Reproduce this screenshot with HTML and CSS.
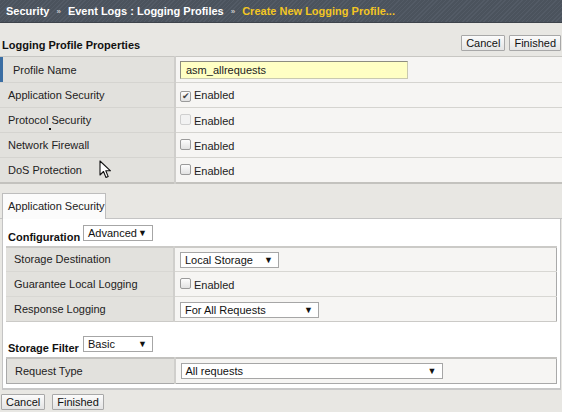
FILE: index.html
```html
<!DOCTYPE html>
<html>
<head>
<meta charset="utf-8">
<link rel="stylesheet" href="styles.css">
</head>
<body>
<div class="crumb">
  <span>Security</span><span class="sep">»</span><span>Event Logs : Logging Profiles</span><span class="sep">»</span><span class="cur">Create New Logging Profile...</span>
</div>
<div class="titlebar">
  <h2 class="title">Logging Profile Properties</h2>
  <div class="btns"><button class="btn">Cancel</button><button class="btn">Finished</button></div>
</div>
<table class="props">
  <tr class="first"><td class="lbl marked">Profile Name</td><td class="val"><div class="input">asm_allrequests</div></td></tr>
  <tr><td class="lbl">Application Security</td><td class="val"><span class="cb checked">✔</span><span class="en">Enabled</span></td></tr>
  <tr><td class="lbl">Protocol Security<span class="dot"></span></td><td class="val"><span class="cb disabled"></span><span class="en">Enabled</span></td></tr>
  <tr><td class="lbl">Network Firewall</td><td class="val"><span class="cb"></span><span class="en">Enabled</span></td></tr>
  <tr><td class="lbl">DoS Protection<svg class="cursor" width="13" height="19" viewBox="0 0 13 19"><path d="M1 1 L1 15 L4.5 11.5 L7 17.5 L9.2 16.6 L6.8 10.8 L11.5 10.8 Z" fill="#fff" stroke="#111" stroke-width="1.1" stroke-linejoin="round"/></svg></td><td class="val"><span class="cb"></span><span class="en">Enabled</span></td></tr>
</table>
<div class="tabstrip"><div class="tab">Application Security</div></div>
<div class="panel">
  <div class="cfg"><span class="cfglbl">Configuration</span><div class="sel sel-sm"><span>Advanced</span><span class="arr">▼</span></div></div>
  <table class="inner">
    <tr><td class="lbl">Storage Destination</td><td class="val"><div class="sel sel-md"><span>Local Storage</span><span class="arr">▼</span></div></td></tr>
    <tr><td class="lbl">Guarantee Local Logging</td><td class="val"><span class="cb"></span><span class="en">Enabled</span></td></tr>
    <tr><td class="lbl">Response Logging</td><td class="val"><div class="sel sel-lg"><span>For All Requests</span><span class="arr">▼</span></div></td></tr>
  </table>
  <div class="cfg cfg2"><span class="cfglbl">Storage Filter</span><div class="sel sel-sm"><span>Basic</span><span class="arr">▼</span></div></div>
  <table class="inner inner2">
    <tr><td class="lbl">Request Type</td><td class="val"><div class="sel sel-xl"><span>All requests</span><span class="arr">▼</span></div></td></tr>
  </table>
</div>
<div class="footer"><button class="btn">Cancel</button><button class="btn">Finished</button></div>
</body>
</html>
```
FILE: styles.css
```css
* { box-sizing: border-box; }
html, body { margin: 0; padding: 0; }
body {
  width: 562px;
  height: 412px;
  overflow: hidden;
  background: #e8e7e3;
  font-family: "Liberation Sans", Arial, sans-serif;
  font-size: 11px;
  color: #222;
}
.crumb {
  height: 23px;
  display: flex;
  align-items: center;
  padding-left: 6px;
  gap: 7px;
  color: #fff;
  font-weight: bold;
  font-size: 11px;
  background: repeating-linear-gradient(135deg, #535b66 0 1px, #4b535d 1px 3px);
  border-bottom: 1px solid #3d434b;
}
.crumb .sep { font-size: 8px; color: #c8c8c8; }
.crumb .cur { color: #f3c623; }
.titlebar {
  height: 33px;
  display: flex;
  justify-content: space-between;
  align-items: flex-start;
}
.title {
  margin: 16px 0 0 2px;
  font-size: 11px;
  font-weight: bold;
  color: #111;
}
.btns { display: flex; gap: 4px; margin-top: 12px; margin-right: 1px; }
.btn {
  height: 16px;
  padding: 0 4px;
  font-family: "Liberation Sans", Arial, sans-serif;
  font-size: 11px;
  color: #111;
  background: linear-gradient(#fbfbfb, #e4e4e4);
  border: 1px solid #a8a8a8;
  border-radius: 1px;
  line-height: 14px;
}
table { border-collapse: collapse; }
.props {
  width: 562px;
  border-top: 1px solid #c8c7c3;
  border-bottom: 2px solid #c3c2be;
}
td { padding: 0; }
.lbl {
  width: 175px;
  background: #e2e1dd;
  border-right: 2px solid #cfcecb;
  padding-left: 8px;
  position: relative;
}
.val {
  background: #f6f5f3;
  padding-left: 4px;
}
.en { position: relative; top: 1px; }
.props tr { height: 25px; border-bottom: 1px solid #d5d4d0; }
.props tr:last-child { border-bottom: none; }
.props tr.first { height: 26px; }
.marked { padding-left: 13px; box-shadow: inset 3px 0 0 #3b6ea3; }
.input {
  width: 228px;
  height: 18px;
  background: #ffffc4;
  border: 1px solid #c9c9b0;
  border-top-color: #8c8c80;
  border-left-color: #8c8c80;
  padding-left: 5px;
  line-height: 16px;
  margin-top: 1px;
}
.cb {
  display: inline-block;
  width: 11px;
  height: 11px;
  border: 1px solid #9a9a9a;
  border-radius: 2px;
  background: linear-gradient(#fdfdfd, #e2e2e2);
  vertical-align: -1px;
  margin-right: 3px;
  font-size: 9px;
  line-height: 9px;
  text-align: center;
  color: #444;
}
.cb.disabled { border-color: #cfcfcf; background: #f2f2f2; }
.dot {
  position: absolute;
  left: 49px;
  top: 20px;
  width: 2px;
  height: 2px;
  background: #111;
}
.cursor { position: absolute; left: 99px; top: 2px; }
.tabstrip {
  height: 35px;
  padding: 9px 0 0 2px;
  border-bottom: 1px solid #c4c4c4;
  display: flex;
}
.tab {
  width: 104px;
  height: 26px;
  background: #fbfbfb;
  border: 1px solid #bdbdbd;
  border-bottom: none;
  padding: 6px 0 0 5px;
  margin-bottom: -1px;
}
.panel {
  margin: 0 1px 0 2px;
  height: 171px;
  background: #fff;
  border-left: 1px solid #c4c4c4;
  border-right: 1px solid #c4c4c4;
  border-bottom: 2px solid #c8c8c8;
  padding: 6px 0 0 3px;
}
.cfg { display: flex; align-items: flex-start; height: 21px; }
.cfg2 { margin-top: 14px; }
.cfglbl {
  font-weight: bold;
  font-size: 11px;
  width: 77px;
  padding-left: 2px;
  padding-top: 6px;
  color: #111;
}
.sel {
  display: flex;
  justify-content: space-between;
  align-items: center;
  height: 16px;
  background: #fff;
  border: 1px solid #a6a6a6;
  padding: 0 5px 0 4px;
  color: #111;
}
.sel .arr { font-size: 9px; color: #111; }
.sel-sm { width: 70px; }
.sel-md { width: 99px; margin-top: 1px; }
.sel-lg { width: 139px; margin-top: 1px; }
.sel-xl { width: 262px; margin-top: 1px; }
.inner {
  width: 551px;
  border-top: 2px solid #cbcac7;
  border-right: 1px solid #a9a9a9;
  border-bottom: 1px solid #cbcac7;
}
.inner tr { height: 25px; border-bottom: 1px solid #d8d7d3; }
.inner tr:last-child { border-bottom: none; }
.inner .lbl { width: 168px; padding-left: 8px; border-right: 2px solid #d0cfcc; }
.inner .val { padding-left: 5px; }
.inner2 { border: 1px solid #a9a9a9; border-top: 2px solid #c3c2bf; }
.inner2 tr { height: 25px; }
.footer { display: flex; gap: 7px; padding: 4px 0 0 1px; }
```
